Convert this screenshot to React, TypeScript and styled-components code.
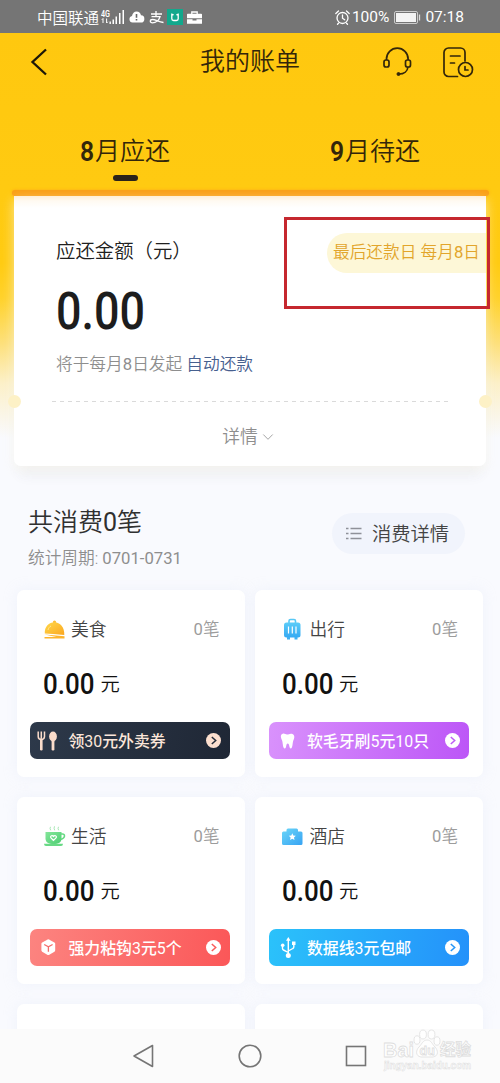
import React from "react";
import styled, { createGlobalStyle } from "styled-components";

const GlobalStyle = createGlobalStyle`
  * { box-sizing: border-box; }
  body {
    margin: 0;
    background: #f9fafe;
    font-family: Roboto, "Noto Sans CJK SC", sans-serif;
    font-weight: 350;
  }
  svg { display: block; flex: none; overflow: visible; }
`;

const Screen = styled.div`
  position: relative;
  width: 500px;
  height: 1083px;
  overflow: hidden;
  display: flex;
  flex-direction: column;
  background: #f9fafe;
`;

const Digits = styled.span`
  font-weight: 400;
`;

const StatusBar = styled.div`
  height: 33px;
  flex: none;
  display: flex;
  align-items: center;
  padding: 1px 36px 0 37px;
  background: #757575;
  color: #fff;
  font-size: 15.5px;
  white-space: nowrap;
`;
const StatusSpacer = styled.div`flex: 1;`;
const StatusIcon = styled.span<{ $gap: number }>`
  display: block;
  margin-left: ${(p) => p.$gap}px;
`;
const StatusText = styled.span<{ $gap?: number }>`
  margin-left: ${(p) => p.$gap ?? 0}px;
`;

const Body = styled.div`
  flex: 1;
  min-height: 0;
  overflow: hidden;
  display: flex;
  flex-direction: column;
  background: linear-gradient(
    180deg,
    #ffc80f 0,
    #ffcb12 230px,
    #ffd22b 265px,
    #fde07a 310px,
    #fcf0c8 350px,
    #f9fafe 405px
  );
`;

const NavBar = styled.div`
  height: 56px;
  flex: none;
  display: grid;
  grid-template-columns: 150px 200px 150px;
  align-items: center;
`;
const BackSlot = styled.div`padding: 2px 0 0 30px;`;
const Title = styled.div`
  padding-top: 1px;
  text-align: center;
  font-size: 25px;
  line-height: 36px;
  color: #33260a;
`;
const NavActions = styled.div`
  display: flex;
  gap: 31px;
  padding: 2px 0 0 33px;
`;

const Tabs = styled.div`
  display: grid;
  grid-template-columns: 1fr 1fr;
  height: 101px;
  flex: none;
`;
const Tab = styled.div`
  display: flex;
  flex-direction: column;
  align-items: center;
  padding-top: 45px;
  font-size: 25px;
  line-height: 36px;
  color: #33260a;
`;
const TabLabel = styled.div`
  display: flex;
  gap: 1px;
`;
const TabDigit = styled.span`
  font-size: 28px;
  font-weight: 600;
  width: 14px;
  transform: scaleX(0.88);
  transform-origin: 0 50%;
`;
const TabMark = styled.div`
  margin-top: 5px;
  width: 25px;
  height: 6px;
  border-radius: 3px;
  background: #2a231a;
`;

const Slot = styled.div`
  flex: none;
  height: 6px;
  margin: 0 11px 0 12px;
  border-radius: 3px;
  background: #fa9f14;
  box-shadow: 0 0 3px #fda613;
`;

const BillCard = styled.section`
  position: relative;
  flex: none;
  margin: 0 14px;
  width: 472px;
  height: 270px;
  display: flex;
  flex-direction: column;
  border-radius: 0 0 7px 7px;
  background: linear-gradient(180deg, #fff0d8 0, #fffaf2 5px, #fff 12px);
  box-shadow: 0 4px 12px rgba(250, 248, 235, 0.65), 0 14px 14px -6px rgba(70, 80, 110, 0.08);
`;
const BillTop = styled.div`
  display: flex;
  justify-content: space-between;
  padding: 37px 0 0 42px;
  height: 80px;
`;
const BillLabel = styled.div`
  font-size: 19.4px;
  line-height: 38px;
  color: #202020;
`;
const DueBadge = styled.div`
  width: 159px;
  height: 40px;
  padding-left: 6px;
  border-radius: 20px 0 0 20px;
  background: #fdf7d7;
  color: #e2a52b;
  font-size: 16.7px;
  line-height: 40px;
  white-space: nowrap;
`;
const BillAmount = styled.div`
  height: 60px;
  padding-left: 41.5px;
  margin-top: 6px;
  font-size: 51px;
  line-height: 60px;
  font-weight: 500;
  color: #1d1d1d;
`;
const Squeezed = styled.span`
  display: inline-block;
  transform: scaleX(0.88);
  transform-origin: 0 50%;
`;
const BillHint = styled.div`
  margin-top: 10px;
  padding-left: 42px;
  font-size: 16.7px;
  line-height: 25px;
  color: #8e8e8e;
`;
const HintLink = styled.span`
  color: #47608f;
`;
const Divider = styled.div`
  margin: 24px 36px 0 38px;
  height: 1px;
  background: repeating-linear-gradient(90deg, #dadada 0 4px, transparent 4px 8px);
`;
const Notch = styled.span<{ $side: "left" | "right" }>`
  position: absolute;
  top: 199px;
  ${(p) => p.$side}: -6px;
  width: 13px;
  height: 13px;
  border-radius: 50%;
  background: #fdf1c6;
`;
const DetailToggle = styled.div`
  display: flex;
  justify-content: center;
  align-items: center;
  gap: 5px;
  margin-top: 22px;
  padding-right: 5px;
  font-size: 17.8px;
  line-height: 26px;
  color: #8e8e8e;
`;

const SummaryRow = styled.div`
  flex: none;
  height: 124px;
  padding: 39px 35px 0 28px;
  display: flex;
  justify-content: space-between;
`;
const SummaryTitle = styled.div`
  font-size: 25px;
  line-height: 36px;
  color: #303030;
`;
const SummaryPeriod = styled.div`
  margin-top: 5px;
  font-size: 16.7px;
  line-height: 25px;
  color: #8e8e8e;
`;
const DetailButton = styled.div`
  margin-top: 8px;
  width: 133.5px;
  height: 41px;
  padding: 0 0 1px 14px;
  display: flex;
  align-items: center;
  gap: 10.5px;
  border-radius: 21px;
  background: #f1f4fc;
  font-size: 19.3px;
  color: #444;
`;

const Grid = styled.div`
  flex: none;
  padding: 0 16.5px;
  display: grid;
  grid-template-columns: 228px 228px;
  grid-auto-rows: 187px;
  gap: 20px 10.5px;
`;
const Card = styled.div`
  padding: 27px 13.5px 0 13.9px;
  border-radius: 7px;
  background: #fff;
  box-shadow: 0 0 14px rgba(215, 222, 245, 0.25);
`;
const CardHead = styled.div`
  display: flex;
  align-items: center;
  height: 26px;
  padding: 0 11.5px 0 13.5px;
`;
const CardIcon = styled.div`
  width: 27px;
  padding-bottom: 2px;
`;
const CardName = styled.div`
  flex: 1;
  font-size: 17.8px;
  line-height: 26px;
  color: #444;
`;
const CardCount = styled.div`
  font-size: 16.6px;
  line-height: 26px;
  color: #9c9c9c;
`;
const CardAmount = styled.div`
  display: flex;
  align-items: center;
  height: 40px;
  margin-top: 21px;
  padding-left: 13px;
  color: #111;
`;
const CardNumber = styled.div`
  width: 57px;
  font-size: 29.5px;
  line-height: 40px;
  font-weight: 500;
`;
const CardUnit = styled.div`
  padding-top: 2px;
  font-size: 19.3px;
  line-height: 40px;
`;
const Banner = styled.div<{ $bg: string; $fg: string }>`
  display: flex;
  align-items: center;
  height: 37px;
  width: 200px;
  margin-top: 18px;
  padding: 0 9px 0 7px;
  border-radius: 7px;
  background: ${(p) => p.$bg};
  color: ${(p) => p.$fg};
  font-size: 15.9px;
  font-weight: 450;
  line-height: 37px;
  white-space: nowrap;
`;
const BannerIcon = styled.div`width: 31px;`;
const BannerText = styled.div`
  flex: 1;
  padding-top: 1px;
`;

const SystemNav = styled.div`
  position: relative;
  flex: none;
  height: 54px;
  display: flex;
  justify-content: center;
  align-items: center;
  gap: 83px;
  background: #fbfbfb;
`;
const Watermark = styled.div`
  position: absolute;
  left: 383px;
  top: 0;
`;

const HighlightBox = styled.div`
  position: absolute;
  left: 284px;
  top: 217px;
  width: 206px;
  height: 92px;
  border: 3px solid #c5282f;
`;

const Signal = () => (
  <svg width="24" height="17" viewBox="0 0 24 17" fill="#fff">
    <text x="0" y="7.5" fontSize="8.5" fontWeight="600" textLength="9" lengthAdjust="spacingAndGlyphs">4G</text>
    <path d="M2 9.5v4.5M.8 10.8 2 9.5M5.6 14V9.5M6.8 12.8 5.6 14" stroke="#fff" strokeWidth="1" />
    <path d="M8.5 12.5h1.4V15H8.5zM11.5 10.5h1.5V15h-1.5zM14.5 7.5H16V15h-1.5zM18 4h1.5v11H18zM21.5 1H23v14h-1.5z" />
  </svg>
);
const CloudAlert = () => (
  <svg width="15" height="12" viewBox="0 0 15 12">
    <path d="M3.5 11.5A3.3 3.3 0 0 1 3 5C3.4 2.3 5.2.5 7.6.5c2.300 0 4 1.500 4.400 3.800A3.500 3.500 0 0 1 11.500 11.500z" fill="#fff" />
    <path d="M7.5 3v3.800M7.500 8v1.600" stroke="#666" strokeWidth="1.6" />
  </svg>
);
const PayMark = () => (
  <svg width="15" height="13" viewBox="0 0 15 13" fill="none" stroke="#fff" strokeWidth="1.3">
    <path d="M2 3h11M7 0v5.500M2.500 5.700h8.500C10 9 7 11.800 3.500 11.800c-3 0-2.800-3.300 0-3.300 3 0 6 2.500 11 3" />
  </svg>
);
const GreenApp = () => (
  <svg width="16" height="16" viewBox="0 0 16 16">
    <rect width="16" height="16" fill="#12a88c" />
    <path d="M4.800 4.500v5.200c0 1.200.8 1.800 1.800 1.800h2.800c1 0 1.800-.6 1.800-1.800V4.500M4.800 5l1.800 1M11.200 5 9.400 6" fill="none" stroke="#fff" strokeWidth="1.3" />
  </svg>
);
const Briefcase = () => (
  <svg width="15" height="13" viewBox="0 0 15 13">
    <path d="M4.800 3V1h5.400v2" fill="none" stroke="#fff" strokeWidth="1.3" />
    <path d="M0 3.500Q0 2.800.8 2.800h13.400q.8 0 .8.700V7.300H0zM0 8.200h5.500v1.300h4V8.200H15v4.600H0z" fill="#fff" />
  </svg>
);
const Alarm = () => (
  <svg width="15" height="15" viewBox="0 0 15 15" fill="none" stroke="#fff" strokeWidth="1.3" strokeLinecap="round">
    <circle cx="7.5" cy="8" r="5.5" />
    <path d="M7.500 5v3.200l2.200 1.600M.8 3.500 3.500 1M14.200 3.500 11.500 1M3.500 13.200l-1 1M11.500 13.200l1 1" />
  </svg>
);
const Battery = () => (
  <svg width="27" height="13" viewBox="0 0 27 13">
    <rect x=".5" y=".5" width="23" height="12" rx="1.5" fill="none" stroke="#ccc" />
    <rect x="2" y="2" width="20" height="9" fill="#f3f3f3" />
    <path d="M25.500 3.500v6" stroke="#ddd" strokeWidth="1.3" />
  </svg>
);
const Back = () => (
  <svg width="17" height="28" viewBox="0 0 17 28" fill="none" stroke="#1d1708" strokeWidth="2.3">
    <path d="M16 1.500 2.500 14 16 26.500" />
  </svg>
);
const Headset = () => (
  <svg width="29" height="30" viewBox="0 0 29 30" fill="none" stroke="#33260a" strokeWidth="1.7">
    <rect x="1" y="13" width="5" height="7" rx="2" />
    <rect x="22.5" y="13" width="5" height="7" rx="2" />
    <path d="M3.500 13V12a10.800 10.800 0 0 1 21.600 0v1M25 20c-.5 4-4 7-9 7" />
    <circle cx="15.5" cy="27" r="1.5" fill="#33260a" strokeWidth="1" />
  </svg>
);
const BillHistory = () => (
  <svg width="31" height="31" viewBox="0 0 31 31" fill="none" stroke="#33260a" strokeWidth="1.7" strokeLinecap="round">
    <path d="M14.500 29.500H5.500a4.500 4.500 0 0 1-4.500-4.500V5.500A4.500 4.500 0 0 1 5.500 1h12A4.500 4.500 0 0 1 22 5.500V14M7.500 9h9.500M7.500 16h4" />
    <circle cx="22.5" cy="22.5" r="7" />
    <path d="M22 19.500v3.500h3" />
  </svg>
);
const Chevron = () => (
  <svg width="10" height="6" viewBox="0 0 10 6" fill="none" stroke="#a5a5a5" strokeWidth="1">
    <path d="M.3.5 5 5.300 9.700.5" />
  </svg>
);
const ListGlyph = () => (
  <svg width="16" height="13" viewBox="0 0 16 13" stroke="#8f9199" strokeWidth="1.7">
    <path d="M0 1.500h2.500M4.500 1.500h11M0 6.500h2.500M4.500 6.500h11M0 11.500h2.500M4.500 11.500h11" />
  </svg>
);

const FoodIcon = () => (
  <svg width="21" height="19" viewBox="0 0 21 19">
    <defs>
      <linearGradient id="food" x1="0" y1="0" x2="1" y2="1">
        <stop offset="0" stopColor="#ffd84a" />
        <stop offset="1" stopColor="#fba720" />
      </linearGradient>
    </defs>
    <circle cx="10.5" cy="2" r="1.6" fill="#fdbc34" />
    <path d="M.8 13.500C.3 6.500 5 2.200 10.500 2.200S20.800 7 20.300 15L9 14z" fill="url(#food)" />
    <path d="M.5 14.500 20.500 16.200v2.300H.5V17h12z" fill="#fdb42c" />
    <path d="M4 10c.5-2 1.500-3.300 3-4" stroke="#ffe694" fill="none" />
  </svg>
);
const TravelIcon = () => (
  <svg width="21" height="22" viewBox="0 0 21 22">
    <defs>
      <linearGradient id="travel" x1="0" y1="0" x2="0" y2="1">
        <stop offset="0" stopColor="#5cccf8" />
        <stop offset="1" stopColor="#36a9f2" />
      </linearGradient>
    </defs>
    <path d="M7 5V3q0-1.500 1.500-1.500h3.500Q13.500 1.500 13.500 3v2" fill="none" stroke="#58c8f5" strokeWidth="1.6" />
    <rect x="2" y="4.5" width="16.5" height="15" rx="2.5" fill="url(#travel)" />
    <path d="M5 19h3v2.500H5zM12.500 19h3v2.500h-3z" fill="#3eb0f3" />
    <path d="M6.500 8.500v7M10.300 8.500v7M14 8.500v7" stroke="#fff" strokeWidth="1.2" />
  </svg>
);
const LifeIcon = () => (
  <svg width="21" height="21" viewBox="0 0 21 21">
    <defs>
      <linearGradient id="life" x1="0" y1="0" x2="1" y2="1">
        <stop offset="0" stopColor="#84e69a" />
        <stop offset="1" stopColor="#4dce72" />
      </linearGradient>
    </defs>
    <path d="M6.500.8q-1 1.800.2 3.500M10.500.3q-1 2 .2 4M14.500.8q-1 1.800.2 3.500" fill="none" stroke="#a8e8b5" />
    <path d="M1.500 6h16v6.500c0 3.800-3 5.500-8 5.500s-8-1.700-8-5.500z" fill="url(#life)" />
    <path d="M17 8h1.500q2 0 2 2t-3.500 3.500" fill="none" stroke="#65d982" strokeWidth="1.5" />
    <path d="M0 17.700h19q0 2.300-2 2.300H2q-2 0-2-2.300" fill="#68d985" />
    <path d="M9.500 14.500 6.800 11.700c-.9-1.900 1.700-3 2.700-1.300 1-1.700 3.600-.6 2.700 1.300z" fill="none" stroke="#fff" strokeWidth="1.2" />
  </svg>
);
const HotelIcon = () => (
  <svg width="21" height="19" viewBox="0 0 21 19">
    <defs>
      <linearGradient id="hotel" x1="0" y1="0" x2="1" y2="1">
        <stop offset="0" stopColor="#6ad6f8" />
        <stop offset="1" stopColor="#38a3f3" />
      </linearGradient>
    </defs>
    <path d="M1.500 4.500h3V3Q4.500 1.500 6 1.500h8.500Q16 1.500 16 3v1.500h3q1.500 0 1.500 1.500v10.500q0 1.500-1.500 1.500h-17.500Q0 18 0 16.500V6q0-1.500 1.500-1.500" fill="url(#hotel)" />
    <path d="m10.300 6.300 1 2.200 2.500.3-1.800 1.700.5 2.400-2.200-1.200-2.200 1.200.5-2.400-1.800-1.700 2.500-.3z" fill="#fff" />
  </svg>
);

const Cutlery = () => (
  <svg width="21" height="20" viewBox="0 0 21 20" fill="#fadccb">
    <path d="M1.200.5v5q0 3 3.100 3t3.200-3v-5M4.300.5v7" fill="none" stroke="#fadccb" strokeWidth="1.5" />
    <rect x="3" y="7.5" width="2.6" height="12" rx="1.2" />
    <ellipse cx="16" cy="5.5" rx="3.9" ry="5" />
    <rect x="14.6" y="9" width="2.8" height="10.5" rx="1.2" />
  </svg>
);
const Tooth = () => (
  <svg width="22" height="16" viewBox="0.8 0 22 16">
    <path d="M7.500.7C9.500.2 10.500 1.800 12 1.600 13.500 1.500 15 0 17.300 1c2.200 1 2.200 3.800 1 6-1.200 2.300-.5 7.500-2.500 8.500-2 .5-1.300-5-3.300-5s-1 5.500-3.200 5c-2-.8-1.500-6-2.500-8.300C5.600 4.800 4.800 1.600 7.500.7z" fill="#fff" />
  </svg>
);
const Cube = () => (
  <svg width="22" height="17" viewBox="0.8 0 22 17">
    <path d="M11.500.5q.6-.3 1.200 0l5.500 3q.8.500.8 1.300v6.500q0 .9-.8 1.400l-5.500 3.200q-.6.300-1.200 0L6 12.700q-.8-.5-.8-1.400V4.800q0-.8.8-1.300z" fill="#fff" />
    <path d="m8 5.500 4.200 2.300 4.200-2.300M12.200 7.800v5" fill="none" stroke="#f46c6c" strokeWidth="1.3" />
  </svg>
);
const Usb = () => (
  <svg width="22" height="21" viewBox="0 0 22 21" fill="#fff">
    <path d="M12.300 3v14M6.500 8.500v3q0 1 1 1.500l4.800 2.500M17.800 7v3q0 1-1 1.500l-4.500 2.500" fill="none" stroke="#fff" strokeWidth="1.4" />
    <path d="m12.300 0 2.300 3.700H10z" />
    <circle cx="6.7" cy="8.3" r="1.8" />
    <path d="M16 4.500h3.500V8H16z" />
    <circle cx="12.3" cy="18.5" r="2.5" />
  </svg>
);
const Go = ({ disc, arrow }: { disc: string; arrow: string }) => (
  <svg width="15" height="15" viewBox="0 0 15 15">
    <circle cx="7.5" cy="7.5" r="7.5" fill={disc} />
    <path d="m5.800 4 3.900 3.500L5.800 11" fill="none" stroke={arrow} strokeWidth="1.5" />
  </svg>
);

const categories = [
  { name: "美食", icon: <FoodIcon />, promo: "领30元外卖券", promoIcon: <Cutlery />, bg: "linear-gradient(100deg,#2d394a,#1f2735)", fg: "#fbe6da", disc: "#fde0cf", arrow: "#252c38" },
  { name: "出行", icon: <TravelIcon />, promo: "软毛牙刷5元10只", promoIcon: <Tooth />, bg: "linear-gradient(100deg,#d992fc,#bc55f7)", fg: "#fff", disc: "#fff", arrow: "#bd5cf5" },
  { name: "生活", icon: <LifeIcon />, promo: "强力粘钩3元5个", promoIcon: <Cube />, bg: "linear-gradient(100deg,#fc8480,#fb5758)", fg: "#fff", disc: "#fff", arrow: "#f95b5b" },
  { name: "酒店", icon: <HotelIcon />, promo: "数据线3元包邮", promoIcon: <Usb />, bg: "linear-gradient(100deg,#2bc2fa,#2491fa)", fg: "#fff", disc: "#fff", arrow: "#2596f7" },
];

const BaiduMark = () => (
  <svg width="92" height="44" viewBox="0 0 92 44" fill="#fefefe" stroke="#dedede" strokeWidth=".8" fontFamily="Liberation Sans, Noto Sans CJK SC, sans-serif" fontWeight="700">
    <text x="0" y="28" fontSize="21" textLength="31" lengthAdjust="spacingAndGlyphs">Bai</text>
    <ellipse cx="34" cy="11" rx="3" ry="4.2" />
    <ellipse cx="40" cy="5.5" rx="3.4" ry="4.5" />
    <ellipse cx="48.5" cy="5.5" rx="3.4" ry="4.5" />
    <ellipse cx="54" cy="12" rx="3" ry="4.2" />
    <path d="M44 11c4 0 5 4 8 7s4 9-2 10H38c-6-1-5-7-2-10s4-7 8-7z" />
    <text x="36.5" y="25.5" fontSize="12.5">du</text>
    <text x="57" y="26" fontSize="15.5">经验</text>
    <text x="1" y="40" fontSize="10" textLength="87" lengthAdjust="spacingAndGlyphs" strokeWidth=".5">jingyan.baidu.com</text>
  </svg>
);

export default function App() {
  return (
    <Screen>
      <GlobalStyle />
      <StatusBar>
        <StatusText>中国联通</StatusText>
        <StatusIcon $gap={2}><Signal /></StatusIcon>
        <StatusIcon $gap={4}><CloudAlert /></StatusIcon>
        <StatusIcon $gap={5}><PayMark /></StatusIcon>
        <StatusIcon $gap={3}><GreenApp /></StatusIcon>
        <StatusIcon $gap={4}><Briefcase /></StatusIcon>
        <StatusSpacer />
        <StatusIcon $gap={0}><Alarm /></StatusIcon>
        <StatusText $gap={2}><Digits>100%</Digits></StatusText>
        <StatusIcon $gap={5}><Battery /></StatusIcon>
        <StatusText $gap={4}><Digits>07:18</Digits></StatusText>
      </StatusBar>
      <Body>
        <NavBar>
          <BackSlot><Back /></BackSlot>
          <Title>我的账单</Title>
          <NavActions>
            <Headset />
            <BillHistory />
          </NavActions>
        </NavBar>
        <Tabs>
          <Tab>
            <TabLabel><TabDigit>8</TabDigit>月应还</TabLabel>
            <TabMark />
          </Tab>
          <Tab>
            <TabLabel><TabDigit>9</TabDigit>月待还</TabLabel>
          </Tab>
        </Tabs>
        <Slot />
        <BillCard>
          <BillTop>
            <BillLabel>应还金额（元）</BillLabel>
            <DueBadge>最后还款日 每月<Digits>8</Digits>日</DueBadge>
          </BillTop>
          <BillAmount><Squeezed>0.00</Squeezed></BillAmount>
          <BillHint>将于每月<Digits>8</Digits>日发起 <HintLink>自动还款</HintLink></BillHint>
          <Divider />
          <Notch $side="left" />
          <Notch $side="right" />
          <DetailToggle>详情<Chevron /></DetailToggle>
        </BillCard>
        <SummaryRow>
          <div>
            <SummaryTitle>共消费<Digits>0</Digits>笔</SummaryTitle>
            <SummaryPeriod>统计周期: <Digits>0701-0731</Digits></SummaryPeriod>
          </div>
          <DetailButton><ListGlyph />消费详情</DetailButton>
        </SummaryRow>
        <Grid>
          {categories.map((c) => (
            <Card key={c.name}>
              <CardHead>
                <CardIcon>{c.icon}</CardIcon>
                <CardName>{c.name}</CardName>
                <CardCount><Digits>0</Digits>笔</CardCount>
              </CardHead>
              <CardAmount>
                <CardNumber><Squeezed>0.00</Squeezed></CardNumber>
                <CardUnit>元</CardUnit>
              </CardAmount>
              <Banner $bg={c.bg} $fg={c.fg}>
                <BannerIcon>{c.promoIcon}</BannerIcon>
                <BannerText>{c.promo}</BannerText>
                <Go disc={c.disc} arrow={c.arrow} />
              </Banner>
            </Card>
          ))}
          <Card />
          <Card />
        </Grid>
      </Body>
      <SystemNav>
        <svg width="22" height="24" viewBox="0 0 22 24" fill="none" stroke="#757575" strokeWidth="1.6" strokeLinejoin="round">
          <path d="M19.500 1.500v21L1 12z" />
        </svg>
        <svg width="24" height="24" viewBox="0 0 24 24" fill="none" stroke="#757575" strokeWidth="1.6">
          <circle cx="12" cy="12" r="10.8" />
        </svg>
        <svg width="22" height="22" viewBox="0 0 22 22" fill="none" stroke="#757575" strokeWidth="1.6">
          <rect x="1.5" y="1.5" width="19" height="19" />
        </svg>
        <Watermark><BaiduMark /></Watermark>
      </SystemNav>
      <HighlightBox />
    </Screen>
  );
}
